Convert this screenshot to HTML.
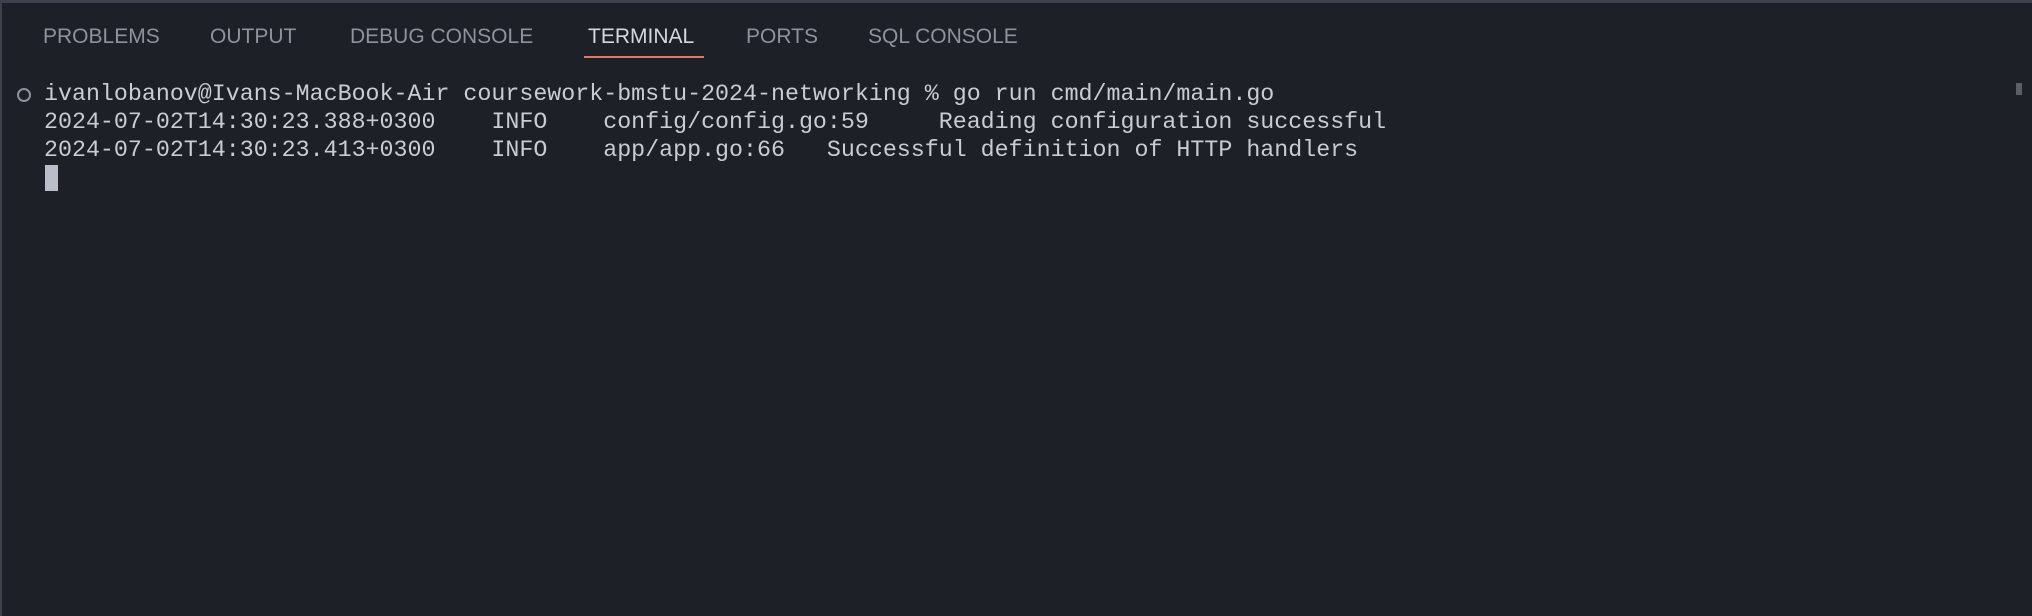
<!DOCTYPE html>
<html><head><meta charset="utf-8"><style>
html,body{margin:0;padding:0;}
body{width:2032px;height:616px;background:#1e2028;position:relative;overflow:hidden;border-top:3px solid #3d414b;border-left:2px solid #3d414b;box-sizing:border-box;}
.tab{position:absolute;top:20px;font-family:"Liberation Sans",sans-serif;font-size:21px;color:#8d929b;line-height:28px;white-space:nowrap;}
.tab.active{color:#d5d8de;}
.ul{position:absolute;left:582px;top:53px;width:120px;height:2px;background:#e07b61;}
.term{position:absolute;left:42px;top:77px;font-family:"Liberation Mono",monospace;font-size:23.3px;line-height:28px;color:#c9ccd3;white-space:pre;}
.circ{position:absolute;left:15px;top:85px;width:10px;height:10px;border:2px solid #8d929b;border-radius:50%;}
.cur{position:absolute;left:43px;top:162px;width:13px;height:26px;background:#b9bec8;}
.sb{position:absolute;left:2014px;top:80px;width:6px;height:12px;background:#5c5f66;}
</style></head><body>
<div class="tab" style="left:41px">PROBLEMS</div>
<div class="tab" style="left:208px">OUTPUT</div>
<div class="tab" style="left:348px">DEBUG CONSOLE</div>
<div class="tab active" style="left:586px">TERMINAL</div>
<div class="tab" style="left:744px">PORTS</div>
<div class="tab" style="left:866px">SQL CONSOLE</div>
<div class="ul"></div>
<div class="circ"></div>
<div class="term">ivanlobanov@Ivans-MacBook-Air coursework-bmstu-2024-networking % go run cmd/main/main.go
2024-07-02T14:30:23.388+0300    INFO    config/config.go:59     Reading configuration successful
2024-07-02T14:30:23.413+0300    INFO    app/app.go:66   Successful definition of HTTP handlers</div>
<div class="cur"></div>
<div class="sb"></div>
</body></html>
